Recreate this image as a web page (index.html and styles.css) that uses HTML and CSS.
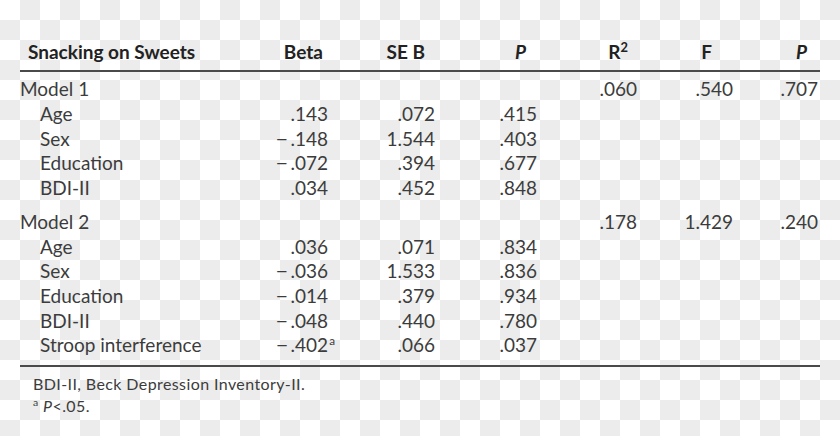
FILE: index.html
```html
<!DOCTYPE html>
<html lang="en">
<head>
<meta charset="utf-8">
<title>Snacking on Sweets</title>
<link rel="stylesheet" href="styles.css">
</head>
<body>
<div class="sheet">
  <div class="tbl">
    <div class="row head">
      <div class="lab">Snacking on Sweets</div>
      <div class="h h-beta">Beta</div>
      <div class="h h-se">SE B</div>
      <div class="h h-p"><i>P</i></div>
      <div class="h h-r">R<sup>2</sup></div>
      <div class="h h-f">F</div>
      <div class="h h-p2"><i>P</i></div>
    </div>
    <div class="body">
      <div class="group">
        <div class="row"><div class="lab model">Model 1</div><div></div><div></div><div></div><div class="v">.060</div><div class="v">.540</div><div class="v last">.707</div></div>
        <div class="row"><div class="lab">Age</div><div class="v">.143</div><div class="v">.072</div><div class="v">.415</div><div></div><div></div><div></div></div>
        <div class="row"><div class="lab">Sex</div><div class="v"><span class="neg">−</span>.148</div><div class="v">1.544</div><div class="v">.403</div><div></div><div></div><div></div></div>
        <div class="row"><div class="lab">Education</div><div class="v"><span class="neg">−</span>.072</div><div class="v">.394</div><div class="v">.677</div><div></div><div></div><div></div></div>
        <div class="row"><div class="lab">BDI-II</div><div class="v">.034</div><div class="v">.452</div><div class="v">.848</div><div></div><div></div><div></div></div>
      </div>
      <div class="group">
        <div class="row"><div class="lab model">Model 2</div><div></div><div></div><div></div><div class="v">.178</div><div class="v">1.429</div><div class="v last">.240</div></div>
        <div class="row"><div class="lab">Age</div><div class="v">.036</div><div class="v">.071</div><div class="v">.834</div><div></div><div></div><div></div></div>
        <div class="row"><div class="lab">Sex</div><div class="v"><span class="neg">−</span>.036</div><div class="v">1.533</div><div class="v">.836</div><div></div><div></div><div></div></div>
        <div class="row"><div class="lab">Education</div><div class="v"><span class="neg">−</span>.014</div><div class="v">.379</div><div class="v">.934</div><div></div><div></div><div></div></div>
        <div class="row"><div class="lab">BDI-II</div><div class="v"><span class="neg">−</span>.048</div><div class="v">.440</div><div class="v">.780</div><div></div><div></div><div></div></div>
        <div class="row"><div class="lab">Stroop interference</div><div class="v"><span class="neg">−</span>.402<sup class="hang">a</sup></div><div class="v">.066</div><div class="v">.037</div><div></div><div></div><div></div></div>
      </div>
    </div>
  </div>
  <div class="notes">
    <p>BDI-II, Beck Depression Inventory-II.</p>
    <p><sup>a</sup> <i>P</i>&lt;.05.</p>
  </div>
</div>
</body>
</html>
```

FILE: styles.css
```css
html, body {
  margin: 0;
  padding: 0;
}
body {
  background-color: #fff;
  background-image: conic-gradient(#ececec 25%, #fff 0 50%, #ececec 0 75%, #fff 0);
  background-size: 40px 40px;
  font-family: Lato, "Open Sans", sans-serif;
  color: #3c3c3c;
  width: 840px;
  height: 436px;
  overflow: hidden;
}
.sheet {
  padding: 40px 20px 0;
}
.tbl {
  width: 800px;
}
.row {
  display: grid;
  grid-template-columns: 220px 96px 107px 102px 100px 96px 79px;
  font-size: 19px;
  line-height: 24.6px;
  height: 24.6px;
  white-space: nowrap;
}
.head {
  font-weight: bold;
  color: #222;
  padding-bottom: 5.4px;
  border-bottom: 2px solid #4a4a4a;
}
.head .lab {
  padding-left: 8px;
}
.h {
  text-align: right;
}
.h-beta { padding-right: 13px; }
.h-se { padding-right: 18px; }
.h-p { padding-right: 19px; }
.h-r { padding-right: 17px; }
.h-f { padding-right: 29px; }
.h-p2 { padding-right: 13px; }
sup {
  vertical-align: super;
  line-height: 0;
  font-size: 0.62em;
}
.head sup {
  font-size: 0.68em;
}
.body {
  padding-top: 5.35px;
  padding-bottom: 7px;
  border-bottom: 2px solid #4a4a4a;
}
.group + .group {
  margin-top: 10px;
}
.lab {
  padding-left: 20px;
}
.lab.model {
  padding-left: 0;
}
.v {
  text-align: right;
  padding-right: 8px;
}
.v.last {
  padding-right: 2px;
}
.neg {
  font-family: "Liberation Sans", sans-serif;
  line-height: 0;
  margin-right: 3px;
}
.hang {
  margin-right: -7px;
  margin-left: 1px;
}
.notes {
  padding: 6.2px 0 0 13px;
  font-size: 16px;
  line-height: 22px;
  letter-spacing: 0.4px;
}
.notes p {
  margin: 0;
}
.notes sup {
  font-size: 0.65em;
}
```
